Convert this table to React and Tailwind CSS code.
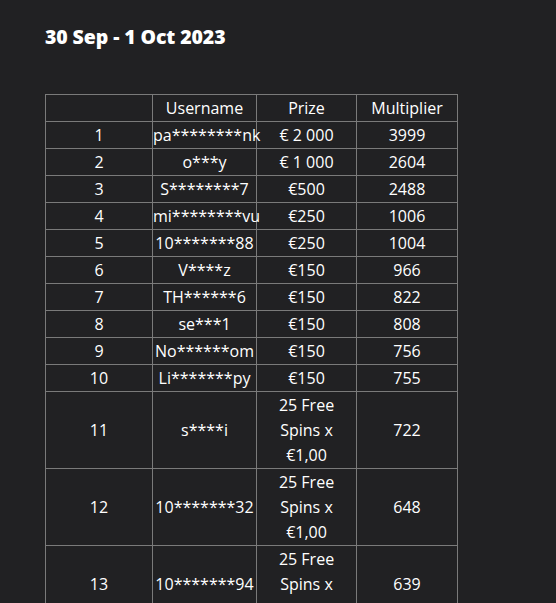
const rows = [
  ["1", "pa********nk", "€ 2 000", "3999"],
  ["2", "o***y", "€ 1 000", "2604"],
  ["3", "S********7", "€500", "2488"],
  ["4", "mi********vu", "€250", "1006"],
  ["5", "10*******88", "€250", "1004"],
  ["6", "V****z", "€150", "966"],
  ["7", "TH******6", "€150", "822"],
  ["8", "se***1", "€150", "808"],
  ["9", "No******om", "€150", "756"],
  ["10", "Li*******py", "€150", "755"],
  ["11", "s****i", null, "722"],
  ["12", "10*******32", null, "648"],
  ["13", "10*******94", null, "639"],
  ["14", "ch*****ko", null, "631"],
];

const cell = "border border-[#7a7a7a] text-center align-middle pt-px leading-[25px] whitespace-nowrap";

export default function App() {
  return (
    <div className="min-h-[603px] bg-[#212123] text-white pl-[45px] pt-[24px] font-['Open_Sans',sans-serif]">
      <h2 className="text-[19.5px] font-extrabold leading-[26px] tracking-[-0.1px]">30 Sep - 1 Oct 2023</h2>

      <table className="mt-[44px] table-fixed border-collapse w-[412px] text-[16px] font-medium">
        <colgroup>
          <col className="w-[107px]" />
          <col className="w-[104px]" />
          <col className="w-[100px]" />
          <col className="w-[101px]" />
        </colgroup>
        <thead>
          <tr>
            <th className={cell + " font-medium"}></th>
            <th className={cell + " font-medium"}>Username</th>
            <th className={cell + " font-medium"}>Prize</th>
            <th className={cell + " font-medium"}>Multiplier</th>
          </tr>
        </thead>
        <tbody>
          {rows.map((r) => (
            <tr key={r[0]}>
              <td className={cell}>{r[0]}</td>
              <td className={cell}>{r[1]}</td>
              <td className={cell}>
                {r[2] ?? (
                  <>
                    25 Free
                    <br />
                    Spins x
                    <br />
                    €1,00
                  </>
                )}
              </td>
              <td className={cell}>{r[3]}</td>
            </tr>
          ))}
        </tbody>
      </table>
    </div>
  );
}
